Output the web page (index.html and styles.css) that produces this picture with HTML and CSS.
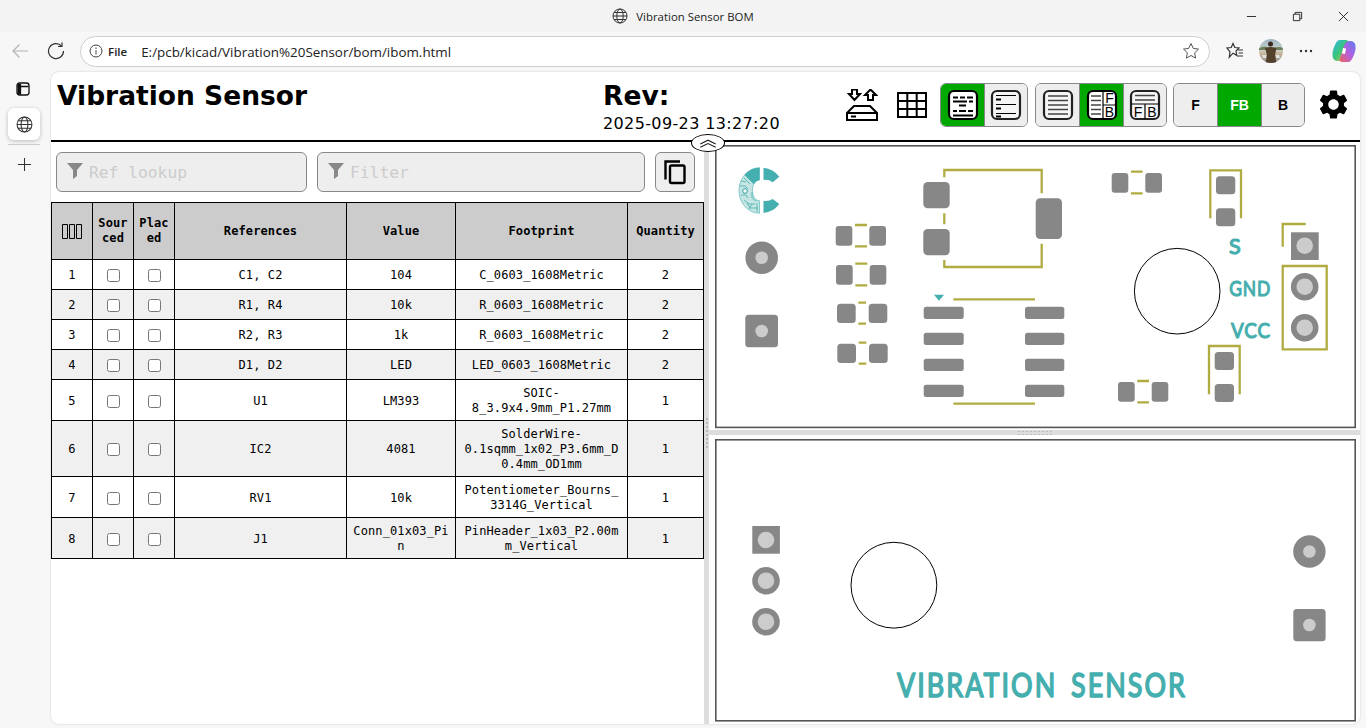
FILE: index.html
```html
<!DOCTYPE html>
<html>
<head>
    <title>Vibration Sensor BOM</title>
    <link rel="stylesheet" href="styles.css">
</head>
<body>
    <div class="titlebar">
        <div class="titleSide"></div>
        <div class="titleText">
            <svg class="globe" viewBox="0 0 16 16"><circle cx="8" cy="8" r="7"/><ellipse cx="8" cy="8" rx="3.2" ry="7"/><path d="M1 8h14M2 4.5h12M2 11.5h12"/></svg>
            <span>Vibration Sensor BOM</span>
        </div>
        <div class="titleSide winControls">
            <div class="winBtn"><svg viewBox="0 0 12 12"><path d="M1 6h10"/></svg></div>
            <div class="winBtn"><svg viewBox="0 0 12 12"><path d="M1.5 3.5h7v7h-7z M3.5 3.5v-2h7v7h-2"/></svg></div>
            <div class="winBtn"><svg viewBox="0 0 12 12"><path d="M1 1l10 10M11 1L1 11"/></svg></div>
        </div>
    </div>

    <div class="toolbar">
        <div class="navSlot"><svg class="navIcon faded" viewBox="0 0 18 18"><path d="M17 9H2M8.5 2.5L2 9l6.5 6.5"/></svg></div>
        <div class="navSlot"><svg class="navIcon" viewBox="0 0 18 18"><path d="M14.5 4A7.5 7.5 0 1 0 16.5 9"/><path d="M15 .5V4.500H11"/></svg></div>
        <div class="addressBar">
            <svg class="infoIcon" viewBox="0 0 14 14"><circle cx="7" cy="7" r="6"/><path d="M7 6.2V10.500M7 3.5v1.400"/></svg>
            <span class="fileLabel">File</span>
            <span class="url">E:/pcb/kicad/Vibration%20Sensor/bom/ibom.html</span>
            <svg class="starIcon" viewBox="0 0 18 18"><path d="M9 1.5l2.300 4.900 5.200.7-3.800 3.700.9 5.300L9 13.500l-4.600 2.600.9-5.300L1.500 7.100l5.200-.7z"/></svg>
        </div>
        <div class="navSlot favSlot"><svg class="navIcon" viewBox="0 0 18 18"><path d="M7 1.5l1.800 4 4.200.5-3 3 .7 4.300L7 11.200 3.300 15.300 4 9.800 1 6l4.200-.5z"/><path d="M12 8h5M12.5 11h4.500M11 14h6"/></svg></div>
        <div class="navSlot avatarSlot">
            <svg class="avatar" viewBox="0 0 24 24">
                <defs>
                    <clipPath id="avatarClip"><circle cx="12" cy="12" r="12"/></clipPath>
                    <linearGradient id="avatarBg" x1="0" y1="0" x2="0" y2="1"><stop offset="0" stop-color="#9fb4c4"/><stop offset=".45" stop-color="#c9d3cf"/><stop offset=".6" stop-color="#c9b596"/><stop offset="1" stop-color="#8d8f90"/></linearGradient>
                </defs>
                <g clip-path="url(#avatarClip)">
                    <rect width="24" height="24" fill="url(#avatarBg)"/>
                    <path d="M0 9q6-3 9 0h6q5-2 9 0v2H0z" fill="#6f7f5a"/>
                    <circle cx="11.500" cy="5" r="2.500" fill="#3b2a20"/>
                    <path d="M6 9q5.500-2 11.500 0l-1.500 7 1.500 8H6.500l1.500-8z" fill="#54412c"/>
                    <path d="M3 16h4v3H4zM17 16h3l1 3h-4z" fill="#dfe3e6"/>
                </g>
            </svg>
        </div>
        <div class="navSlot"><svg class="dots" viewBox="0 0 14 4"><circle cx="2" cy="2" r="1.200"/><circle cx="7" cy="2" r="1.200"/><circle cx="12" cy="2" r="1.200"/></svg></div>
        <div class="navSlot copilotSlot">
            <svg class="copilot" viewBox="0 0 24 24">
                <defs>
                    <linearGradient id="copA" x1="0" y1="0" x2="1" y2="1"><stop offset="0" stop-color="#2fb8e8"/><stop offset=".5" stop-color="#39c47a"/><stop offset="1" stop-color="#f5c83c"/></linearGradient>
                    <linearGradient id="copB" x1="1" y1="0" x2="0" y2="1"><stop offset="0" stop-color="#5a7ff0"/><stop offset=".5" stop-color="#b45fe0"/><stop offset="1" stop-color="#f0605a"/></linearGradient>
                </defs>
                <path d="M8 1h6q2 0 2.500 2L12 17q-1 4-4.500 5H6Q1 22 .5 17 0 12 3 6q2-5 5-5z" fill="url(#copA)"/>
                <path d="M16 23h-6q-2 0-2.500-2L12 7q1-4 4.500-5H18q5 0 5.500 5 .5 5-2.500 11-2 5-5 5z" fill="url(#copB)"/>
                <path d="M11 9l3 .5-1 5.500-3-.5z" fill="#fff"/>
            </svg>
        </div>
    </div>

    <div class="main">
        <div class="rail">
            <svg class="railIcon" viewBox="0 0 16 16"><rect x="2" y="2" width="12" height="12" rx="2.500"/><path d="M2.500 5.500h11M5.500 3v10.500"/><rect x="2.500" y="3" width="3" height="10.500" class="railFill"/></svg>
            <div class="railTab">
                <svg class="globe big" viewBox="0 0 16 16"><circle cx="8" cy="8" r="7"/><ellipse cx="8" cy="8" rx="3.2" ry="7"/><path d="M1 8h14M2 4.5h12M2 11.5h12"/></svg>
            </div>
            <div class="railSep"></div>
            <svg class="railPlus" viewBox="0 0 16 16"><path d="M8 1v14M1 8h14"/></svg>
        </div>

        <div class="page">
            <div class="header">
                <div class="boardTitle">Vibration Sensor</div>
                <div class="revInfo">
                    <div class="revTitle">Rev:</div>
                    <div class="revDate">2025-09-23 13:27:20</div>
                </div>
                <div class="menu">
                    <svg class="plainIcon storage" viewBox="0 0 32 32"><path d="M6 .5h5V5h3l-5.500 6L3 5h3z"/><path d="M22 11h5V6h3L24.500 .5 19 6h3z"/><path d="M8 17h16l7 7v7H1v-7z"/><path d="M1 24h30"/><path d="M5 27.500h5"/></svg>
                    <svg class="plainIcon grid" viewBox="0 0 30 26"><path d="M1 1h28v24H1z M10.300 1v24M19.700 1v24M1 9h28M1 17h28"/></svg>
                    <div class="btnGroup">
                        <div class="btn active">
                            <svg class="btnIcon" viewBox="0 0 32 32"><rect x="2" y="2" width="28" height="28" rx="5"/><path class="thick" d="M6 8.500h5M13 8.500h5M20 8.500h6M6 12.500h14M22 12.500h4M12 16.500h7M6 22h4M12 22h7M21 22h5M6 26.500h20"/></svg>
                        </div>
                        <div class="btn">
                            <svg class="btnIcon" viewBox="0 0 32 32"><rect x="2" y="2" width="28" height="28" rx="5"/><path class="thin" d="M6 6.500h20M6 15.500h20M6 24.500h20"/><path class="thick" d="M6 10.500h5M6 19.500h5M6 27.500h5"/></svg>
                        </div>
                    </div>
                    <div class="btnGroup">
                        <div class="btn">
                            <svg class="btnIcon" viewBox="0 0 32 32"><rect x="2" y="2" width="28" height="28" rx="5"/><path class="bars" d="M6 7h20M6 11.500h20M6 16h20M6 20.500h20M6 25h20"/></svg>
                        </div>
                        <div class="btn active">
                            <svg class="btnIcon" viewBox="0 0 32 32"><rect x="2" y="2" width="28" height="28" rx="5"/><path class="bars" d="M5 7h10M5 11.500h10M5 16h10M5 20.500h10M5 25h10"/><path class="thin" d="M17 2v28M17 16H30"/><text x="23.500" y="14" class="iconLetter">F</text><text x="23.500" y="28" class="iconLetter">B</text></svg>
                        </div>
                        <div class="btn">
                            <svg class="btnIcon" viewBox="0 0 32 32"><rect x="2" y="2" width="28" height="28" rx="5"/><path class="bars" d="M6 6.500h20M6 11h20"/><path class="thin" d="M2 15h28M16 15V30"/><text x="9" y="27.500" class="iconLetter">F</text><text x="23" y="27.500" class="iconLetter">B</text></svg>
                        </div>
                    </div>
                    <div class="btnGroup">
                        <div class="btn txtBtn">F</div>
                        <div class="btn txtBtn active">FB</div>
                        <div class="btn txtBtn">B</div>
                    </div>
                    <svg class="gear" viewBox="0 0 24 24"><path d="M19.14 12.94c.04-.3.06-.61.06-.94 0-.32-.02-.64-.07-.94l2.03-1.58c.18-.14.23-.41.12-.61l-1.92-3.32c-.12-.22-.37-.29-.59-.22l-2.39.96c-.5-.38-1.03-.7-1.62-.94l-.36-2.54c-.04-.24-.24-.41-.48-.41h-3.84c-.24 0-.43.17-.47.41l-.36 2.54c-.59.24-1.13.57-1.62.94l-2.39-.96c-.22-.08-.47 0-.59.22L2.74 8.870c-.12.21-.08.47.12.61l2.03 1.58c-.05.3-.09.63-.09.94s.02.64.07.94l-2.03 1.58c-.18.14-.23.41-.12.61l1.92 3.32c.12.22.37.29.59.22l2.39-.96c.5.38 1.03.7 1.62.94l.36 2.54c.05.24.24.41.48.41h3.84c.24 0 .44-.17.47-.41l.36-2.54c.59-.24 1.13-.56 1.62-.94l2.39.96c.22.08.47 0 .59-.22l1.92-3.32c.12-.22.07-.47-.12-.61l-2.01-1.58zM12 15.600c-1.98 0-3.6-1.62-3.6-3.6s1.62-3.6 3.6-3.6 3.6 1.62 3.6 3.6-1.62 3.6-3.6 3.6z"/></svg>
                </div>
            </div>

            <div class="panes">
                <div class="bomPane">
                    <div class="filters">
                        <div class="filterBox refBox">
                            <svg class="funnel" viewBox="0 0 16 16"><path d="M0 0h16L10 7v6l-4 3V7z"/></svg>
                            <span>Ref lookup</span>
                        </div>
                        <div class="filterBox mainBox">
                            <svg class="funnel" viewBox="0 0 16 16"><path d="M0 0h16L10 7v6l-4 3V7z"/></svg>
                            <span>Filter</span>
                        </div>
                        <div class="copyBtn">
                            <svg viewBox="0 0 24 26"><path d="M2.500 20.500V2.500H17"/><rect x="7" y="6.500" width="14.500" height="17.500" rx="1.500"/></svg>
                        </div>
                    </div>
                    <table class="bom">
                        <colgroup>
                            <col class="cNum"><col class="cChk"><col class="cChk"><col class="cRef"><col class="cVal"><col class="cFoot"><col class="cQty">
                        </colgroup>
                        <thead>
                            <tr>
                                <th><svg class="columnsIcon" viewBox="0 0 20 15"><path d="M.5.5h5v14h-5zM7.500.5h5v14h-5zM14.500.5h5v14h-5z"/></svg></th>
                                <th>Sourced</th>
                                <th>Placed</th>
                                <th>References</th>
                                <th>Value</th>
                                <th>Footprint</th>
                                <th>Quantity</th>
                            </tr>
                        </thead>
                        <tbody>
                            <tr><td>1</td><td><input type="checkbox"></td><td><input type="checkbox"></td><td>C1, C2</td><td>104</td><td>C_0603_1608Metric</td><td>2</td></tr>
                            <tr><td>2</td><td><input type="checkbox"></td><td><input type="checkbox"></td><td>R1, R4</td><td>10k</td><td>R_0603_1608Metric</td><td>2</td></tr>
                            <tr><td>3</td><td><input type="checkbox"></td><td><input type="checkbox"></td><td>R2, R3</td><td>1k</td><td>R_0603_1608Metric</td><td>2</td></tr>
                            <tr><td>4</td><td><input type="checkbox"></td><td><input type="checkbox"></td><td>D1, D2</td><td>LED</td><td>LED_0603_1608Metric</td><td>2</td></tr>
                            <tr><td>5</td><td><input type="checkbox"></td><td><input type="checkbox"></td><td>U1</td><td>LM393</td><td>SOIC-8_3.9x4.9mm_P1.27mm</td><td>1</td></tr>
                            <tr><td>6</td><td><input type="checkbox"></td><td><input type="checkbox"></td><td>IC2</td><td>4081</td><td>SolderWire-0.1sqmm_1x02_P3.6mm_D0.4mm_OD1mm</td><td>1</td></tr>
                            <tr><td>7</td><td><input type="checkbox"></td><td><input type="checkbox"></td><td>RV1</td><td>10k</td><td>Potentiometer_Bourns_3314G_Vertical</td><td>1</td></tr>
                            <tr><td>8</td><td><input type="checkbox"></td><td><input type="checkbox"></td><td>J1</td><td>Conn_01x03_Pin</td><td>PinHeader_1x03_P2.00mm_Vertical</td><td>1</td></tr>
                        </tbody>
                    </table>
                </div>

                <div class="vGutter"></div>

                <div class="boardPane">
                    <!-- front layer, viewBox uses page coordinates -->
                    <svg class="board" viewBox="715 145 642 284">
                        <rect class="edge" x="715.8" y="145.8" width="639.4" height="281.6"/>

                        <path class="fab" d="M763.5 167.7A22.5 22.5 0 0 1 779.3 176.7L772.7 182.3A12 12 0 0 0 763.5 180Z"/>
                        <path class="fab" d="M763.5 213A22.5 22.5 0 0 0 779.3 204L772.7 199A12 12 0 0 1 763.5 200.8Z"/>
                        <path class="logoLeft" d="M759.5 167.7A20.5 22.8 0 0 0 759.5 213.3V200.8A7 10.2 0 0 1 759.5 180Z"/>
                        <path class="fab" d="M759.5 167.7A20.5 22.8 0 0 0 744.5 175L753.500 184Q756 180.500 759.5 180Z"/>
                        <path class="logoTrace" d="M740 186h5l3 3M741 195h5l2 3M744 200l5 4h6M747 203l3 5h8M741 181l5 1M752 192v6l4 3M757 203v9M744 178l6 6M749 209l3-5"/>
                        <circle class="logoVia" cx="745" cy="191" r="2.300"/>

                        <circle class="pad" cx="761.7" cy="257.7" r="16.3"/>
                        <circle class="hole" cx="761.7" cy="257.7" r="6.3"/>
                        <rect class="pad" x="745.3" y="314.7" width="32.7" height="32.6" rx="3.5"/>
                        <circle class="hole" cx="761.7" cy="331" r="6.3"/>

                        <rect class="pad" x="835.7" y="226" width="16.6" height="19.7" rx="3"/>
                        <rect class="pad" x="869.3" y="226" width="16.7" height="19.7" rx="3"/>
                        <rect class="pad" x="836" y="265" width="16.7" height="19.7" rx="3"/>
                        <rect class="pad" x="869.7" y="265" width="16.6" height="19.7" rx="3"/>
                        <rect class="pad" x="837" y="303.7" width="18.7" height="19.3" rx="3.5"/>
                        <rect class="pad" x="868.7" y="303.7" width="18.6" height="19.3" rx="3.5"/>
                        <rect class="pad" x="837.3" y="343.7" width="18.7" height="19.3" rx="3.5"/>
                        <rect class="pad" x="869" y="343.7" width="18.7" height="19.3" rx="3.5"/>
                        <path class="silk" d="M855 225h12M855 246.3h12M855.3 263.7h12M855.3 285.3h12M858.3 302.7h7.700M858.3 323.7h7.700M858.7 342.7h7.600M858.7 363.7h7.600"/>

                        <rect class="pad" x="923.3" y="182" width="26.4" height="26.3" rx="4.5"/>
                        <rect class="pad" x="923.3" y="229" width="26.4" height="26.3" rx="4.5"/>
                        <rect class="pad" x="1035.7" y="198.3" width="26.3" height="40.7" rx="4.5"/>
                        <path class="silk" d="M944.3 177.3V170H1041.7V193.3M944.3 213.3V224.3M944.3 260V267H1041.7V243.7"/>

                        <path class="fab" d="M934 294.7h10l-5 6z"/>
                        <path class="silk" d="M953.3 299.3H1035M953.3 403.7H1035"/>
                        <rect class="pad" x="923.7" y="306.7" width="40" height="12.3" rx="2.5"/>
                        <rect class="pad" x="923.7" y="332.7" width="40" height="12.3" rx="2.5"/>
                        <rect class="pad" x="923.7" y="358.7" width="40" height="12.3" rx="2.5"/>
                        <rect class="pad" x="923.7" y="384.7" width="40" height="12.3" rx="2.5"/>
                        <rect class="pad" x="1025" y="306.7" width="39.3" height="12.3" rx="2.5"/>
                        <rect class="pad" x="1025" y="332.7" width="39.3" height="12.3" rx="2.5"/>
                        <rect class="pad" x="1025" y="358.7" width="39.3" height="12.3" rx="2.5"/>
                        <rect class="pad" x="1025" y="384.7" width="39.3" height="12.3" rx="2.5"/>

                        <rect class="pad" x="1111.7" y="173" width="16.6" height="19.7" rx="3"/>
                        <rect class="pad" x="1145.3" y="173" width="16.7" height="19.7" rx="3"/>
                        <path class="silk" d="M1131 171.7h11.700M1131 193.3h11.700"/>
                        <rect class="pad" x="1118" y="382" width="16.7" height="19.7" rx="3"/>
                        <rect class="pad" x="1151.7" y="382" width="16.6" height="19.7" rx="3"/>
                        <path class="silk" d="M1137.3 381H1149M1137.3 402.3H1149"/>

                        <path class="silk" d="M1210.3 218.3V170.3H1241V218.3"/>
                        <rect class="pad" x="1216" y="176.3" width="19.3" height="18" rx="3.5"/>
                        <rect class="pad" x="1216" y="208.3" width="19.3" height="18" rx="3.5"/>
                        <path class="silk" d="M1209 394.3V346H1239.7V394.3"/>
                        <rect class="pad" x="1214.7" y="352" width="19.3" height="18" rx="3.5"/>
                        <rect class="pad" x="1214.7" y="384" width="19.3" height="18" rx="3.5"/>

                        <circle class="drill" cx="1177.2" cy="291.2" r="42.8"/>

                        <text class="silkText" x="1229" y="254.3" textLength="12.7" lengthAdjust="spacingAndGlyphs">S</text>
                        <text class="silkText" x="1229.3" y="296.3" textLength="41.7" lengthAdjust="spacingAndGlyphs">GND</text>
                        <text class="silkText" x="1231" y="338.3" textLength="40" lengthAdjust="spacingAndGlyphs">VCC</text>

                        <path class="silk" d="M1305.7 224H1282.7V246.7M1282.7 266H1326.7V349.3H1282.7Z"/>
                        <rect class="pad" x="1291" y="232.3" width="27.7" height="27.7"/>
                        <circle class="hole" cx="1304.7" cy="245.7" r="8.3"/>
                        <circle class="pad" cx="1304.7" cy="286.7" r="13.8"/>
                        <circle class="hole" cx="1304.7" cy="286.7" r="8.3"/>
                        <circle class="pad" cx="1304.7" cy="327.7" r="13.8"/>
                        <circle class="hole" cx="1304.7" cy="327.7" r="8.3"/>
                    </svg>

                    <div class="hGutter"></div>

                    <!-- back layer -->
                    <svg class="board backBoard" viewBox="715 439 642 283">
                        <rect class="edge" x="715.8" y="439.8" width="639.4" height="281"/>

                        <rect class="pad" x="752.3" y="526" width="27.6" height="27.7"/>
                        <circle class="hole" cx="766" cy="540" r="8.3"/>
                        <circle class="pad" cx="766" cy="580.7" r="13.8"/>
                        <circle class="hole" cx="766" cy="580.7" r="8.3"/>
                        <circle class="pad" cx="766" cy="621.7" r="13.8"/>
                        <circle class="hole" cx="766" cy="621.7" r="8.3"/>

                        <circle class="drill" cx="893.9" cy="585.2" r="42.9"/>

                        <circle class="pad" cx="1309.4" cy="551.5" r="16.2"/>
                        <circle class="hole" cx="1309.4" cy="551.5" r="6.3"/>
                        <rect class="pad" x="1293.3" y="609" width="32.3" height="32.3" rx="3.5"/>
                        <circle class="hole" cx="1309.4" cy="625" r="6.3"/>

                        <text class="silkText wide" x="897" y="697.3" textLength="290" lengthAdjust="spacingAndGlyphs">VIBRATION SENSOR</text>
                    </svg>
                </div>

                <!-- collapse handle sits over the header line -->
                <div class="collapseHandle">
                    <svg viewBox="0 0 20 8"><path d="M3 4.500L10 1l7 3.500M3 7.500L10 4l7 3.500"/></svg>
                </div>
            </div>
        </div>
    </div>
</body>
</html>
```

FILE: styles.css
```css
* {
    box-sizing: border-box;
}
html, body {
    margin: 0;
    height: 100%;
}
body {
    width: 1366px;
    height: 728px;
    overflow: hidden;
    display: flex;
    flex-direction: column;
    background-color: #f7f7f7;
    font-family: "Open Sans", "Noto Sans", sans-serif;
    color: #000;
}

/* browser frame */
.titlebar {
    height: 32px;
    display: flex;
    align-items: center;
    background-color: #f3f3f3;
}
.titleSide {
    flex: 1;
}
.titleText {
    display: flex;
    align-items: center;
    gap: 8px;
    font-size: 11.4px;
    color: #222;
}
.globe {
    width: 16px;
    height: 16px;
    fill: none;
    stroke: #333;
    stroke-width: 1;
}
.globe.big {
    width: 17px;
    height: 17px;
}
.winControls {
    display: flex;
    justify-content: flex-end;
}
.winBtn {
    width: 46px;
    height: 32px;
    display: flex;
    align-items: center;
    justify-content: center;
}
.winBtn svg {
    width: 11px;
    height: 11px;
    fill: none;
    stroke: #222;
    stroke-width: 1;
}
.toolbar {
    height: 38px;
    display: flex;
    align-items: center;
    padding: 0 0 0 2px;
}
.navSlot {
    width: 36px;
    height: 32px;
    flex-shrink: 0;
    display: flex;
    align-items: center;
    justify-content: center;
}
.navIcon {
    width: 18px;
    height: 18px;
    fill: none;
    stroke: #333;
    stroke-width: 1.2;
}
.navIcon.faded {
    stroke: #b4b4b4;
}
.addressBar {
    width: 1130px;
    height: 31px;
    margin: 0 7px 0 6px;
    padding: 0 9px 0 8px;
    display: flex;
    align-items: center;
    background-color: #fff;
    border: 1px solid #cfcfcf;
    border-radius: 16px;
    font-size: 13.4px;
    color: #222;
}
.infoIcon {
    width: 14px;
    height: 14px;
    fill: none;
    stroke: #444;
    stroke-width: 1;
}
.fileLabel {
    margin-left: 5px;
    font-weight: 600;
    font-size: 11.5px;
}
.url {
    margin-left: 14px;
    padding-top: 1px;
    flex: 1;
}
.starIcon {
    width: 18px;
    height: 18px;
    fill: none;
    stroke: #555;
    stroke-width: 1;
}
.avatarSlot {
    width: 35px;
}
.avatar {
    width: 24px;
    height: 24px;
}
.dots {
    width: 14px;
    height: 4px;
    fill: #333;
}
.copilotSlot {
    margin-left: 2px;
}
.copilot {
    width: 24px;
    height: 24px;
}

.main {
    flex: 1;
    display: flex;
    min-height: 0;
}
.rail {
    width: 51px;
    flex-shrink: 0;
    display: flex;
    flex-direction: column;
    align-items: flex-start;
    padding: 11px 0 0 8px;
}
.railIcon {
    width: 16px;
    height: 16px;
    margin-left: 7px;
    fill: none;
    stroke: #111;
    stroke-width: 1.3;
}
.railFill {
    fill: #111;
    stroke: none;
}
.railTab {
    width: 32px;
    height: 32px;
    margin-top: 11px;
    display: flex;
    align-items: center;
    justify-content: center;
    background-color: #fff;
    border-radius: 6px;
    box-shadow: 0 1px 4px rgba(0, 0, 0, 0.25);
}
.railSep {
    width: 32px;
    height: 1px;
    margin-top: 4px;
    background-color: #ccc;
}
.railPlus {
    width: 15px;
    height: 15px;
    margin: 12px 0 0 9px;
    fill: none;
    stroke: #333;
    stroke-width: 1.1;
}
.page {
    width: 1309px;
    height: 652px;
    margin-top: 2px;
    display: flex;
    flex-direction: column;
    background-color: #fff;
    border-radius: 8px;
    box-shadow: 0 0 2px rgba(0, 0, 0, 0.2);
    overflow: hidden;
}

/* ibom header */
.header {
    height: 70px;
    flex-shrink: 0;
    display: flex;
    border-bottom: 2px solid #000;
}
.boardTitle {
    width: 552px;
    padding: 4px 0 0 6px;
    font-family: "DejaVu Sans", sans-serif;
    font-weight: bold;
    font-size: 26.5px;
    line-height: 40px;
}
.revInfo {
    font-family: "DejaVu Sans", sans-serif;
}
.revTitle {
    padding-top: 4px;
    font-weight: bold;
    font-size: 26.5px;
    line-height: 40px;
}
.revDate {
    font-size: 16px;
    letter-spacing: 0.37px;
    line-height: 20px;
    margin-top: -2px;
    white-space: nowrap;
}
.menu {
    margin-left: auto;
    margin-right: 9px;
    display: flex;
    align-items: flex-start;
    padding-top: 11px;
}
.plainIcon {
    fill: none;
    stroke: #000;
    stroke-width: 2;
}
.storage {
    width: 32px;
    height: 32px;
    margin: 6px 0 0;
}
.grid {
    width: 30px;
    height: 26px;
    margin: 9px 13px 0 19px;
}
.btnGroup {
    display: flex;
    height: 44px;
    margin-right: 7px;
    border: 1px solid #888;
    border-radius: 6px;
    overflow: hidden;
}
.btn {
    width: 44px;
    height: 42px;
    display: flex;
    align-items: center;
    justify-content: center;
    background-color: #eee;
    border-left: 1px solid #888;
}
.btn:first-child {
    width: 43px;
    border-left: 0;
}
.btn:last-child {
    width: 43px;
}
.btnGroup + .btnGroup + .btnGroup {
    margin-left: -1px;
}
.btn.active {
    background-color: #00a800;
    color: #fff;
}
.txtBtn {
    font-family: "Liberation Sans", sans-serif;
    font-weight: bold;
    font-size: 14px;
}
.btnIcon {
    width: 32px;
    height: 32px;
}
.btnIcon rect {
    fill: #fff;
    stroke: #000;
    stroke-width: 2.2;
}
.btn:not(.active) .btnIcon rect {
    fill: #f6f6f6;
    stroke: #222;
}
.btnIcon path {
    fill: none;
    stroke: #000;
}
.btnIcon .thin {
    stroke-width: 1.2;
}
.btnIcon .thick {
    stroke-width: 1.8;
}
.btnIcon .bars {
    stroke: #444;
    stroke-width: 1.7;
}
.iconLetter {
    font-family: "Liberation Sans", sans-serif;
    font-size: 14px;
    text-anchor: middle;
    fill: #000;
}
.gear {
    width: 35px;
    height: 35px;
    margin: 4px 0 0 4px;
    fill: #000;
}

/* panes */
.panes {
    flex: 1;
    display: flex;
    min-height: 0;
    position: relative;
}
.bomPane {
    width: 653px;
    flex-shrink: 0;
}
.filters {
    display: flex;
    gap: 10px;
    padding: 10px 5px;
}
.filterBox {
    height: 40px;
    display: flex;
    align-items: center;
    gap: 6px;
    padding: 0 0 0 10px;
    background-color: #eee;
    border: 1px solid #888;
    border-radius: 6px;
    font-family: "DejaVu Sans Mono", monospace;
    font-size: 16.3px;
    color: #ccc;
}
.refBox {
    width: 251px;
}
.mainBox {
    width: 328px;
}
.funnel {
    width: 16px;
    height: 16px;
    margin-top: -2px;
    fill: #888;
}
.copyBtn {
    width: 40px;
    height: 40px;
    display: flex;
    align-items: center;
    justify-content: center;
    background-color: #eee;
    border: 1px solid #888;
    border-radius: 6px;
}
.copyBtn svg {
    width: 24px;
    height: 26px;
    fill: none;
    stroke: #000;
    stroke-width: 2.4;
}

.bom {
    width: 653px;
    table-layout: fixed;
    border-collapse: collapse;
    font-family: "DejaVu Sans Mono", monospace;
    font-size: 12px;
    letter-spacing: 0.11px;
    line-height: 15px;
    text-align: center;
}
.cNum, .cChk {
    width: 41px;
}
.cRef {
    width: 172px;
}
.cVal {
    width: 109px;
}
.cFoot {
    width: 172px;
}
.cQty {
    width: 76px;
}
.bom th, .bom td {
    border: 1px solid #000;
    overflow-wrap: anywhere;
}
.bom th {
    height: 57px;
    padding: 5px;
    background-color: #ccc;
}
.bom td {
    height: 30px;
    padding: 6px 5px 4px;
}
.bom tbody tr:nth-child(even) {
    background-color: #f0f0f0;
}
.bom input {
    display: block;
    margin: 0 0 0 9px;
}
.columnsIcon {
    display: block;
    width: 20px;
    height: 15px;
    margin: 0 auto;
    fill: none;
    stroke: #000;
    stroke-width: 1;
}

.vGutter {
    width: 5px;
    flex-shrink: 0;
    background-color: #ddd;
    display: flex;
    align-items: center;
    justify-content: center;
}
.vGutter::after {
    content: "";
    width: 4px;
    height: 32px;
    background-image: radial-gradient(#bbb 1px, transparent 1px);
    background-size: 4px 4px;
}
.boardPane {
    flex: 1;
    display: flex;
    flex-direction: column;
    padding: 3px 0 0 6px;
}
.board {
    display: block;
    width: 642px;
    height: 284px;
    flex-shrink: 0;
}
.backBoard {
    height: 283px;
}
.hGutter {
    height: 5px;
    margin: 1px 0 4px -6px;
    width: 651px;
    flex-shrink: 0;
    background-color: #ddd;
    display: flex;
    justify-content: center;
}
.hGutter::after {
    content: "";
    width: 36px;
    height: 5px;
    background-image: radial-gradient(#bbb 1px, transparent 1px);
    background-size: 4px 3px;
}
.collapseHandle {
    position: absolute;
    left: 640px;
    top: -8px;
    width: 34px;
    height: 18px;
    display: flex;
    align-items: center;
    justify-content: center;
    background-color: #fff;
    border: 1px solid #000;
    border-radius: 50%;
}
.collapseHandle svg {
    width: 22px;
    height: 9px;
    fill: none;
    stroke: #222;
    stroke-width: 1;
}

/* pcb layers */
.edge {
    fill: #fff;
    stroke: #555;
    stroke-width: 1.6;
}
.pad {
    fill: #878787;
}
.hole {
    fill: #ccc;
}
.silk {
    fill: none;
    stroke: #b0ac42;
    stroke-width: 2.3;
}
.fab {
    fill: #45aeae;
}
.drill {
    fill: none;
    stroke: #000;
    stroke-width: 1;
}
.logoLeft {
    fill: #c4e5e3;
    stroke: #45aeae;
    stroke-width: 0.6;
}
.logoTrace {
    fill: none;
    stroke: #45aeae;
    stroke-width: 0.8;
}
.logoVia {
    fill: #fff;
    stroke: #2f9c9c;
    stroke-width: 1;
}
.silkText {
    font-family: "Lato", "Open Sans", sans-serif;
    font-size: 22px;
    letter-spacing: 1px;
    fill: #45aeae;
    stroke: #45aeae;
    stroke-width: 1.2;
    stroke-linejoin: round;
}
.silkText.wide {
    font-size: 33px;
    letter-spacing: 2.5px;
    word-spacing: 6px;
    stroke-width: 1.6;
}
```
